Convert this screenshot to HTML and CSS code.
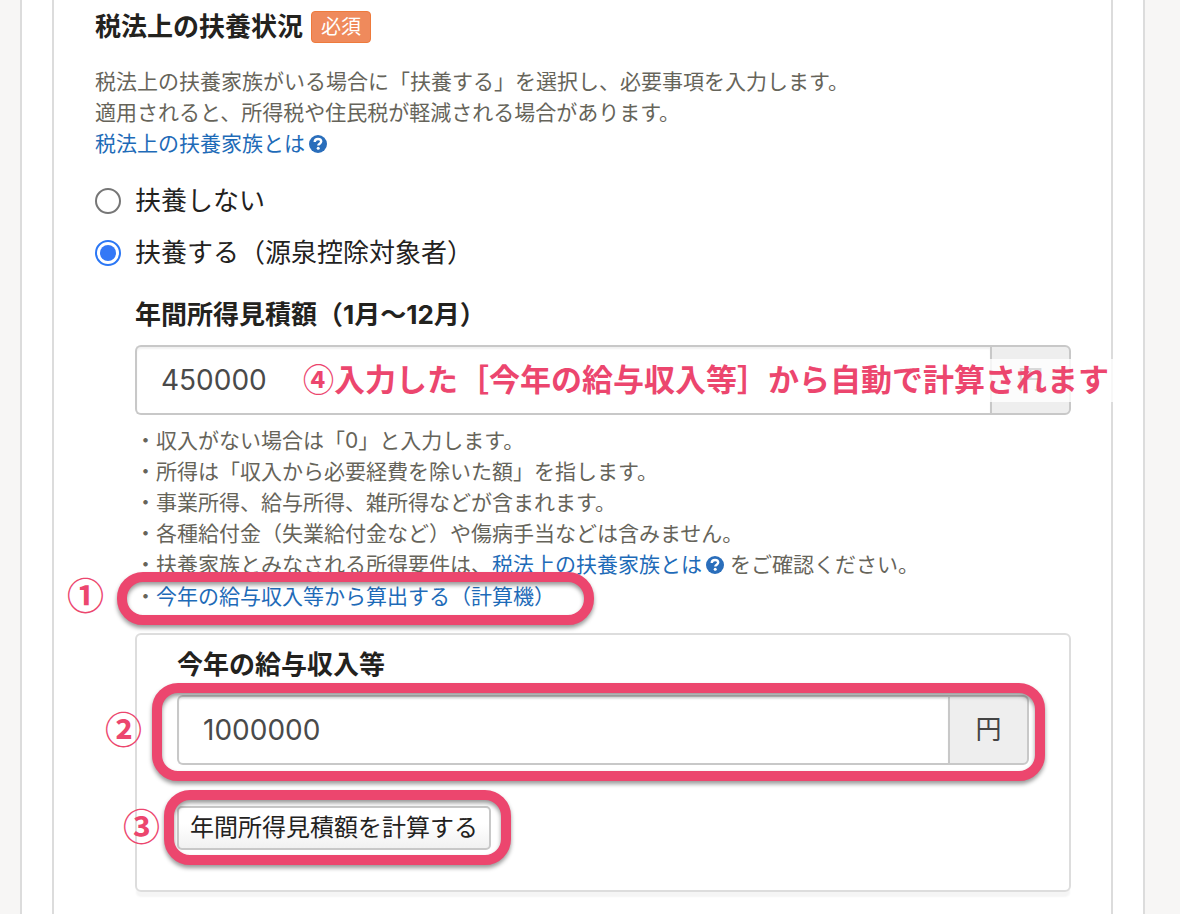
FILE: index.html
```html
<!DOCTYPE html>
<html lang="ja">
<head>
    <meta charset="UTF-8">
    <title>税法上の扶養状況</title>
    <link rel="stylesheet" href="styles.css">
</head>
<body>
    <main class="page">
        <section class="panel">
            <div class="title-row">
                <h2 class="title">税法上の扶養状況</h2>
                <span class="badge">必須</span>
            </div>
            <div class="description">
                <p>税法上の扶養家族がいる場合に「扶養する」を選択し、必要事項を入力します。</p>
                <p>適用されると、所得税や住民税が軽減される場合があります。</p>
                <p><a href="#about">税法上の扶養家族とは<svg class="help-icon" viewBox="0 0 18 18" aria-hidden="true"><circle cx="9" cy="9" r="9" fill="#2a6ebb"/><path d="M5.700 7C5.800 5.100 7.100 4 9 4c1.900 0 3.200 1 3.200 2.600 0 2-2.900 2.100-2.900 3.900" fill="none" stroke="#fff" stroke-width="2.400"/><circle cx="9.200" cy="13.300" r="1.500" fill="#fff"/></svg></a></p>
            </div>
            <div class="choices">
                <label class="choice"><input type="radio" name="dependent" value="no"> 扶養しない</label>
                <label class="choice"><input type="radio" name="dependent" value="yes" checked> 扶養する（源泉控除対象者）</label>
            </div>
            <div class="detail">
                <label class="field-label" for="income">年間所得見積額（1月〜12月）</label>
                <div class="input-group">
                    <input type="text" id="income" value="450000">
                    <span class="unit">円</span>
                    <span class="note">④入力した［今年の給与収入等］から自動で計算されます</span>
                </div>
                <ul class="hints">
                    <li>・収入がない場合は「0」と入力します。</li>
                    <li>・所得は「収入から必要経費を除いた額」を指します。</li>
                    <li>・事業所得、給与所得、雑所得などが含まれます。</li>
                    <li>・各種給付金（失業給付金など）や傷病手当などは含みません。</li>
                    <li>・扶養家族とみなされる所得要件は、<a href="#about">税法上の扶養家族とは<svg class="help-icon" viewBox="0 0 18 18" aria-hidden="true"><circle cx="9" cy="9" r="9" fill="#2a6ebb"/><path d="M5.700 7C5.800 5.100 7.100 4 9 4c1.900 0 3.200 1 3.200 2.600 0 2-2.900 2.100-2.900 3.900" fill="none" stroke="#fff" stroke-width="2.400"/><circle cx="9.200" cy="13.300" r="1.500" fill="#fff"/></svg></a> をご確認ください。</li>
                </ul>
                <div class="calc-link">
                    ・<a href="#calculator">今年の給与収入等から算出する（計算機）</a>
                    <span class="mark mark-link"></span>
                    <span class="step step-link">①</span>
                </div>
                <div class="calculator" id="calculator">
                    <label class="field-label" for="salary">今年の給与収入等</label>
                    <div class="input-group">
                        <input type="text" id="salary" value="1000000">
                        <span class="unit">円</span>
                        <span class="mark mark-input"></span>
                        <span class="step step-input">②</span>
                    </div>
                    <div class="action">
                        <button type="button" class="calc-btn">年間所得見積額を計算する</button>
                        <span class="mark mark-btn"></span>
                        <span class="step step-btn">③</span>
                    </div>
                </div>
            </div>
        </section>
    </main>
</body>
</html>
```
FILE: styles.css
```css
* {
    box-sizing: border-box;
}
body {
    margin: 0;
    background: #f7f6f5;
    color: #23221e;
    font-family: Inter, "Noto Sans CJK JP", sans-serif;
    font-size: 26px;
    line-height: 32px;
}
h2, p, ul {
    margin: 0;
    padding: 0;
}
a {
    color: #1e6bb8;
    text-decoration: none;
}
.page {
    margin: 0 35px 0 20px;
    padding: 0 30px;
    border: solid #dcdcdc;
    border-width: 0 2px;
    background: #fff;
}
.panel {
    min-height: 100vh;
    padding: 7px 40px 0 41px;
    border: solid #dcdcdc;
    border-width: 0 2px;
}
.title-row {
    display: flex;
    align-items: center;
    gap: 8px;
    height: 40px;
}
.title {
    font-size: 26px;
    font-weight: 700;
}
.badge {
    padding: 0 9px;
    border: 1px solid #ee7a3c;
    border-radius: 4px;
    background: #ef8a5c;
    color: #fff;
    font-size: 20px;
    line-height: 30px;
}
.description {
    margin-top: 19px;
    color: #66645a;
    font-size: 21px;
    line-height: 31px;
}
.help-icon {
    width: 18px;
    height: 18px;
    margin-left: 4px;
    vertical-align: -2px;
}
.choices {
    display: flex;
    flex-direction: column;
    gap: 20px;
    margin-top: 26px;
}
.choice {
    display: flex;
    align-items: center;
    gap: 14px;
}
.choice input {
    appearance: none;
    width: 26px;
    height: 26px;
    margin: 0;
    border: 2px solid #767676;
    border-radius: 50%;
    background: #fff;
}
.choice input:checked {
    padding: 3px;
    border-color: #2b77f5;
    background: #3478f6 content-box;
}
.detail {
    margin: 30px 0 0 40px;
}
.field-label {
    display: block;
    margin-bottom: 14px;
    font-weight: 700;
}
.input-group {
    display: flex;
    position: relative;
    height: 70px;
}
.input-group input {
    flex: 1;
    min-width: 0;
    padding: 0 24px;
    border: 2px solid #c8c8c8;
    border-right: 0;
    border-radius: 6px 0 0 6px;
    background: #fff;
    box-shadow: inset 0 2px 2px rgba(0,0,0,0.06);
    color: #4a4a4a;
    font: inherit;
    font-size: 28px;
}
.unit {
    display: flex;
    align-items: center;
    justify-content: center;
    width: 81px;
    border: 2px solid #c8c8c8;
    border-radius: 0 6px 6px 0;
    background: #eee;
    color: #444;
}
/* 説明用の注釈 */
.note {
    position: absolute;
    top: 14px;
    right: -44px;
    padding: 0 6px 6px 0;
    background: rgba(255,255,255,0.8);
    color: #ec466e;
    font-family: "Noto Sans CJK JP", sans-serif;
    font-size: 31px;
    font-weight: 700;
    line-height: 37px;
    white-space: nowrap;
}
.hints {
    margin-top: 10px;
    color: #66645a;
    font-size: 21px;
    line-height: 31px;
    list-style: none;
}
.calc-link {
    position: relative;
    margin-top: 1px;
    color: #66645a;
    font-size: 21px;
    line-height: 31px;
}
.calculator {
    margin-top: 21px;
    padding: 14px 40px 40px;
    border: 2px solid #ddd;
    border-radius: 6px;
    box-shadow: 0 6px 2px -1px #f5f5f5;
}
.action {
    display: flex;
    position: relative;
    width: fit-content;
    margin-top: 41px;
}
.calc-btn {
    height: 44px;
    padding: 0 11px;
    border: 2px solid #c8c8c8;
    border-radius: 5px;
    background: linear-gradient(#fff 40%, #f1f1f1);
    color: #23221e;
    font: inherit;
    font-size: 24px;
    line-height: 32px;
    white-space: nowrap;
}
.mark {
    position: absolute;
    border: 10px solid #ec466e;
    border-radius: 26px;
    filter: drop-shadow(0 3px 2px rgba(0,0,0,0.4));
    pointer-events: none;
}
.mark-link {
    top: -9px;
    left: -18px;
    width: 477px;
    height: 53px;
}
.mark-input {
    inset: -12px -16px -16px -25px;
}
.mark-btn {
    inset: -16px -20px -15px -13px;
}
.step {
    position: absolute;
    color: #ec466e;
    font-family: "Noto Sans CJK JP", sans-serif;
    font-size: 37px;
    font-weight: 700;
    line-height: 36px;
}
.step-link {
    top: -5px;
    left: -68px;
}
.step-input {
    top: 15px;
    left: -72px;
}
.step-btn {
    top: 1px;
    left: -54px;
}
```
